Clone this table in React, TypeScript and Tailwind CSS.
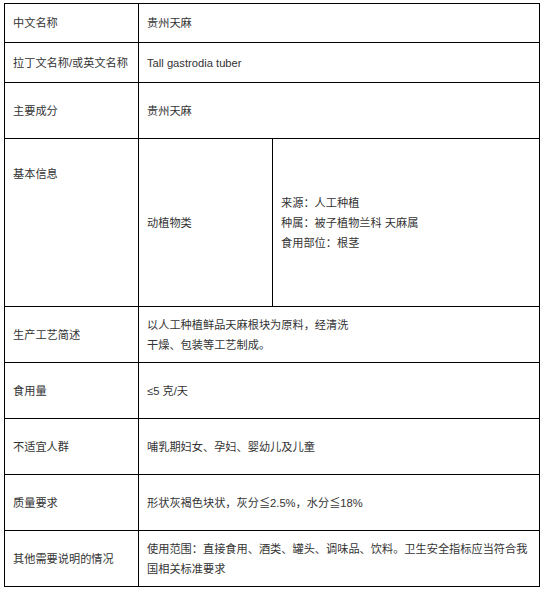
import React from "react";

const font = {
  fontFamily: '"Liberation Sans", "Noto Sans CJK SC", sans-serif',
};

function Row({
  label,
  h,
  children,
  first,
}: {
  label: React.ReactNode;
  h: string;
  children: React.ReactNode;
  first?: boolean;
}) {
  return (
    <div className={`flex ${first ? "" : "border-t border-black"} ${h}`}>
      <div className="w-[134px] shrink-0 border-r border-black pl-2 flex items-center">
        {label}
      </div>
      <div className="flex-1 pl-2 flex items-center">{children}</div>
    </div>
  );
}

export default function App() {
  return (
    <div className="bg-white w-[543px] h-[593px] pt-[3px] pl-[4px]" style={font}>
      <div className="w-[536px] border border-black text-[11.2px] leading-[20px] text-[#333]">
        <Row first h="h-[38px]" label="中文名称">
          贵州天麻
        </Row>
        <Row h="h-[40px]" label="拉丁文名称/或英文名称">
          Tall gastrodia tuber
        </Row>
        <Row h="h-[56px]" label="主要成分">
          贵州天麻
        </Row>
        <div className="flex border-t border-black h-[168px]">
          <div className="w-[134px] shrink-0 border-r border-black pl-2 pt-[25px]">
            基本信息
          </div>
          <div className="w-[134px] shrink-0 border-r border-black pl-2 flex items-center">
            动植物类
          </div>
          <div className="flex-1 pl-2 flex flex-col justify-center">
            <div>来源：人工种植</div>
            <div>种属：被子植物兰科 天麻属</div>
            <div>食用部位：根茎</div>
          </div>
        </div>
        <Row h="h-[56px]" label="生产工艺简述">
          <div>
            以人工种植鲜品天麻根块为原料，经清洗
            <br />
            干燥、包装等工艺制成。
          </div>
        </Row>
        <Row h="h-[56px]" label="食用量">
          ≤5 克/天
        </Row>
        <Row h="h-[56px]" label="不适宜人群">
          哺乳期妇女、孕妇、婴幼儿及儿童
        </Row>
        <Row h="h-[56px]" label="质量要求">
          形状灰褐色块状，灰分≦2.5%，水分≦18%
        </Row>
        <Row h="h-[56px]" label="其他需要说明的情况">
          <div>
            使用范围：直接食用、酒类、罐头、调味品、饮料。卫生安全指标应当符合我
            <br />
            国相关标准要求
          </div>
        </Row>
      </div>
    </div>
  );
}
